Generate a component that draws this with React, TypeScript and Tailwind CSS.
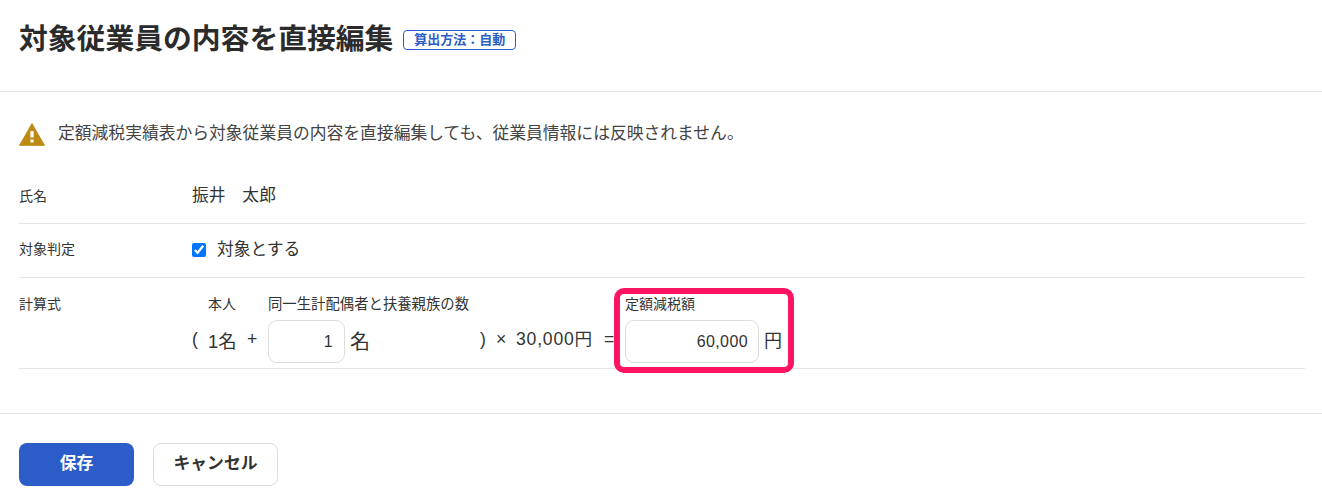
export default function App() {
  const font = { fontFamily: '"Liberation Sans", "Noto Sans CJK JP", sans-serif' };
  return (
    <div style={font} className="relative w-[1322px] h-[502px] bg-white text-[#333333] overflow-hidden">
      <header className="h-[92px] border-b border-[#e5e5e5] px-[19px] pt-[19px] flex items-start gap-[10px]">
        <h1 className="text-[28.8px] leading-[40px] font-bold text-[#2b2b2b] whitespace-nowrap">対象従業員の内容を直接編集</h1>
        <span className="mt-[11px] h-[20px] w-[113px] border border-[#2b5cc8] rounded-[4px] text-[#2b5cc8] text-[13px] font-bold flex items-center justify-center whitespace-nowrap">算出方法：自動</span>
      </header>
      <main className="h-[322px] border-b border-[#e5e5e5] px-[19px] pt-[28px]">
        <div className="flex items-center gap-[13px] h-[28px] mb-[23px]">
          <svg width="26" height="24" viewBox="0 0 26 24" className="shrink-0">
            <path d="M13 1.5 L25.6 23.4 L0.4 23.4 Z" fill="#bf8a14" stroke="#bf8a14" strokeWidth="0.8" strokeLinejoin="round" />
            <rect x="11.4" y="9" width="3.2" height="6.5" fill="#ffffff" />
            <rect x="11.4" y="17.5" width="3.2" height="3" fill="#ffffff" />
          </svg>
          <p className="text-[16.8px] text-[#444444] whitespace-nowrap">定額減税実績表から対象従業員の内容を直接編集しても、従業員情報には反映されません。</p>
        </div>
        <div className="w-[1286px]">
          <div className="flex items-center h-[53px] pb-[2px] border-b border-[#e5e5e5]">
            <div className="w-[173px] text-[14px]">氏名</div>
            <div className="text-[16.8px]">振井　太郎</div>
          </div>
          <div className="flex items-center h-[54px] pb-[2px] border-b border-[#e5e5e5]">
            <div className="w-[173px] text-[14px]">対象判定</div>
            <label className="flex items-center gap-[11px] text-[16.8px]">
              <input type="checkbox" defaultChecked className="w-[14px] h-[14px] m-0 accent-[#0075ff]" />
              対象とする
            </label>
          </div>
          <div className="flex h-[91px] border-b border-[#e5e5e5]">
            <div className="w-[173px] text-[14px] pt-[16px] leading-[20px]">計算式</div>
            <div className="flex items-end pb-[5px] text-[17.6px] tracking-[0.8px] leading-[24px]">
              <span className="w-[16px] pb-[12px]">(</span>
              <div className="w-[30px] mr-[9px] flex flex-col h-[81px]">
                <span className="h-[38px] pt-[12px] text-[14px] tracking-normal leading-[20px] text-left whitespace-nowrap">本人</span>
                <span className="mt-[10px] whitespace-nowrap text-[18.4px] tracking-normal">1名</span>
              </div>
              <span className="w-[21px] pb-[12px]">+</span>
              <div className="w-[212px] flex flex-col h-[81px]">
                <span className="h-[38px] pt-[12px] text-[14.36px] tracking-normal leading-[20px] whitespace-nowrap">同一生計配偶者と扶養親族の数</span>
                <div className="flex items-center gap-[5px]">
                  <input readOnly value="1" className="w-[77px] h-[43px] border border-[#dddddd] rounded-[9px] pl-[10px] pr-[11px] text-right text-[16px] tracking-[0.4px] outline-none" />
                  <span className="text-[20px] tracking-normal">名</span>
                </div>
              </div>
              <span className="w-[16px] pb-[12px]">)</span>
              <span className="w-[20px] pb-[12px]">×</span>
              <span className="w-[88px] pb-[12px] whitespace-nowrap">30,000円</span>
              <span className="w-[21px] pb-[12px]">=</span>
              <div className="flex flex-col h-[81px]">
                <span className="h-[38px] pt-[12px] text-[14px] tracking-normal leading-[20px] whitespace-nowrap">定額減税額</span>
                <div className="flex items-center gap-[5px]">
                  <input readOnly value="60,000" className="w-[134px] h-[43px] border border-[#dddddd] rounded-[9px] pl-[10px] pr-[10px] text-right text-[16px] tracking-[0.4px] outline-none" />
                  <span className="text-[18px] tracking-normal pb-[1px]">円</span>
                </div>
              </div>
            </div>
          </div>
        </div>
      </main>
      <footer className="px-[19px] pt-[29px] flex gap-[19px]">
        <button className="w-[115px] h-[43px] pb-[1px] rounded-[8px] bg-[#2b5cc8] text-white text-[16.8px] font-bold">保存</button>
        <button className="w-[125px] h-[43px] pb-[1px] rounded-[8px] border border-[#dddddd] bg-white text-[#333333] text-[16.8px] font-bold">キャンセル</button>
      </footer>
      <div className="absolute left-[614px] top-[288px] w-[180px] h-[85px] border-[6px] border-[#ff1464] rounded-[10px]" />
    </div>
  );
}
